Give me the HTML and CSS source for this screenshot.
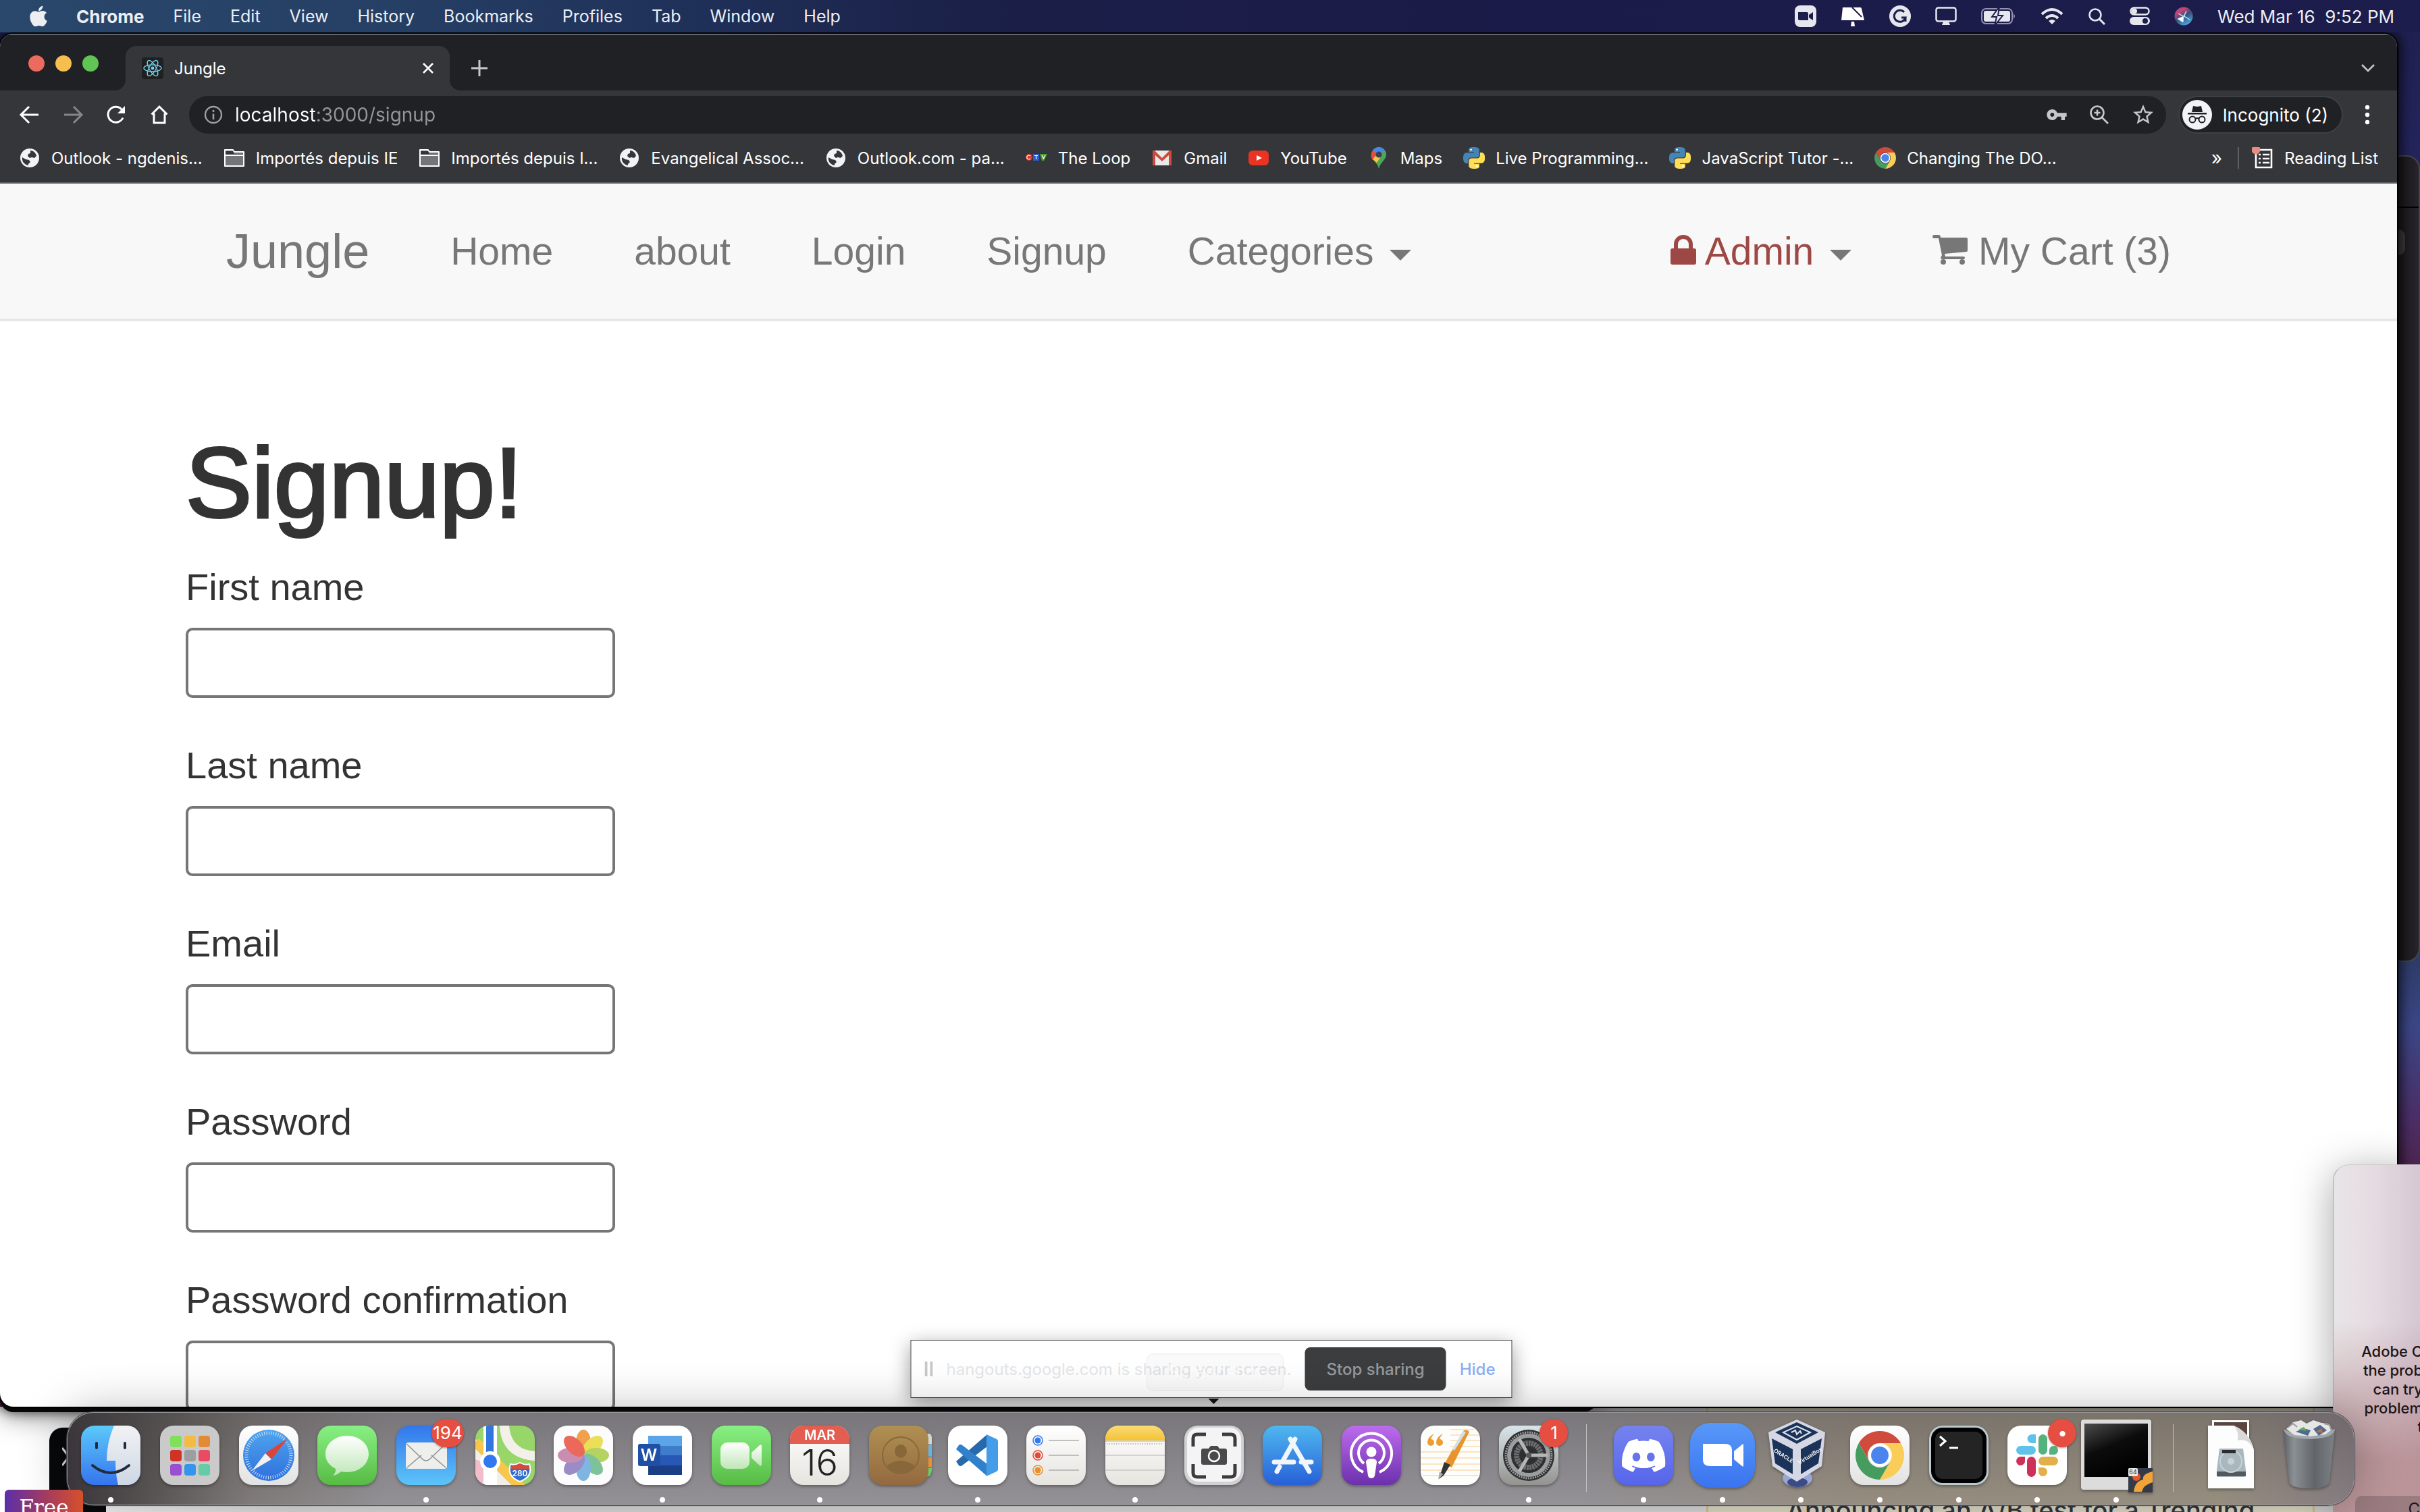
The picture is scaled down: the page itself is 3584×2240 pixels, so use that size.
FILE: index.html
```html
<!DOCTYPE html>
<html lang="en">
<head>
<meta charset="utf-8">
<title>Jungle</title>
<link rel="stylesheet" href="styles.css">
</head>
<body>
<svg class="defs" aria-hidden="true">
  <defs>
    <symbol id="globe" viewBox="0 0 32 32"><circle cx="16" cy="16" r="14" fill="#f1f3f4"/><path d="M17 5c4 0 8 3 9 8l-3 3-4-1-3 1-3-3 1-3 3-1zM5 15l5 3 5 1 2 3-3 3v2C8 26 4 21 5 15z" fill="#35363a"/></symbol>
    <symbol id="folder" viewBox="0 0 32 32"><path d="M2 4h12l2 3h14v21H2z" fill="#74757a" stroke="#fff" stroke-width="2" stroke-linejoin="round"/><path d="M3 6h11l2 4h13v2H3z" fill="#35363a"/><path d="M2 12h28" stroke="#fff" stroke-width="2"/></symbol>
    <symbol id="python" viewBox="0 0 24 24"><path fill="#4584b6" d="M14.25.18l.9.2.73.26.59.3.45.32.34.34.25.34.16.33.1.3.04.26.02.2-.01.13V8.5l-.05.63-.13.55-.21.46-.26.38-.3.31-.33.25-.35.19-.35.14-.33.1-.3.07-.26.04-.21.02H8.77l-.69.05-.59.14-.5.22-.41.27-.33.32-.27.35-.2.36-.15.37-.1.35-.07.32-.04.27-.02.21v3.06H3.17l-.21-.03-.28-.07-.32-.12-.35-.18-.36-.26-.36-.36-.35-.46-.32-.59-.28-.73-.21-.88-.14-1.05-.05-1.23.06-1.22.16-1.04.24-.87.32-.71.36-.57.4-.44.42-.33.42-.24.4-.16.36-.1.32-.05.24-.01h.16l.06.01h8.16v-.83H6.18l-.01-2.75-.02-.37.05-.34.11-.31.17-.28.25-.26.31-.23.38-.2.44-.18.51-.15.58-.12.64-.1.71-.06.77-.04.84-.02 1.27.05z"/><path fill="#ffde57" d="M21.1 6.11l.28.06.32.12.35.18.36.27.36.35.35.47.32.59.28.73.21.88.14 1.04.05 1.23-.06 1.23-.16 1.04-.24.86-.32.71-.36.57-.4.45-.42.33-.42.24-.4.16-.36.09-.32.05-.24.02-.16-.01h-8.22v.82h5.84l.01 2.76.02.36-.05.34-.11.31-.17.29-.25.25-.31.24-.38.2-.44.17-.51.15-.58.13-.64.09-.71.07-.77.04-.84.01-1.27-.04-1.07-.14-.9-.2-.73-.25-.59-.3-.45-.33-.34-.34-.25-.34-.16-.33-.1-.3-.04-.25-.02-.2.01-.13v-5.34l.05-.64.13-.54.21-.46.26-.38.3-.32.33-.24.35-.2.35-.14.33-.1.3-.06.26-.04.21-.02.13-.01h5.84l.69-.05.59-.14.5-.21.41-.28.33-.32.27-.35.2-.36.15-.36.1-.35.07-.32.04-.28.02-.21V6.07h2.09l.14.01z"/><circle cx="8.7" cy="2.9" r="1.1" fill="#fff"/><circle cx="15.3" cy="21.1" r="1.1" fill="#fff"/></symbol>
    <symbol id="chrome-logo" viewBox="-50 -50 100 100"><path d="M-43.3-25A50 50 0 0 1 43.3-25L0-25A25 25 0 0 0-21.65 12.5Z" fill="#cf4b3c"/><path d="M-43.3-25A50 50 0 0 1 43.3-25L0-25A25 25 0 0 0-21.65 12.5Z" fill="#f9cd57" transform="rotate(120)"/><path d="M-43.3-25A50 50 0 0 1 43.3-25L0-25A25 25 0 0 0-21.65 12.5Z" fill="#469c5f" transform="rotate(240)"/><circle r="23" fill="#fff"/><circle r="18" fill="#4c84ee"/></symbol>
    <linearGradient id="g-finder" x2="0" y2="1"><stop stop-color="#5cc9fa"/><stop offset="1" stop-color="#3574ee"/></linearGradient>
    <linearGradient id="g-finder2" x2="0" y2="1"><stop stop-color="#f2f2f5"/><stop offset="1" stop-color="#cdd7e4"/></linearGradient>
    <linearGradient id="g-white" x2="0" y2="1"><stop stop-color="#fff"/><stop offset="1" stop-color="#e2e2e2"/></linearGradient>
    <linearGradient id="g-cream" x2="0" y2="1"><stop stop-color="#fff"/><stop offset="1" stop-color="#e6e4df"/></linearGradient>
    <linearGradient id="g-green" x2="0" y2="1"><stop stop-color="#88f083"/><stop offset="1" stop-color="#57bb44"/></linearGradient>
    <linearGradient id="g-bubble" x2="0" y2="1"><stop stop-color="#fff"/><stop offset="1" stop-color="#bfe6b7"/></linearGradient>
    <linearGradient id="g-mail" x2="0" y2="1"><stop stop-color="#3377ec"/><stop offset="1" stop-color="#5cc5f9"/></linearGradient>
    <linearGradient id="g-blue" x2="0" y2="1"><stop stop-color="#4fa5ee"/><stop offset="1" stop-color="#2e6fdd"/></linearGradient>
    <linearGradient id="g-store" x2="0" y2="1"><stop stop-color="#4fb7ef"/><stop offset="1" stop-color="#2760d8"/></linearGradient>
    <linearGradient id="g-brown" x2="0" y2="1"><stop stop-color="#b09052"/><stop offset="1" stop-color="#93693f"/></linearGradient>
    <linearGradient id="g-purple" x2="0" y2="1"><stop stop-color="#bc6cec"/><stop offset="1" stop-color="#6c30ad"/></linearGradient>
    <linearGradient id="g-yellow" x2="0" y2="1"><stop stop-color="#fadb72"/><stop offset="1" stop-color="#f5c236"/></linearGradient>
    <linearGradient id="g-grey" x2="0" y2="1"><stop stop-color="#d9e5ea"/><stop offset="1" stop-color="#93938f"/></linearGradient>
    <linearGradient id="g-discord" x2="0" y2="1"><stop stop-color="#7583ef"/><stop offset="1" stop-color="#5765eb"/></linearGradient>
    <linearGradient id="g-zoom" x2="0" y2="1"><stop stop-color="#5898f8"/><stop offset="1" stop-color="#3a74f0"/></linearGradient>
    <linearGradient id="g-bin"><stop stop-color="#5d6368"/><stop offset=".2" stop-color="#8b9095"/><stop offset=".6" stop-color="#62666a"/><stop offset="1" stop-color="#7c8186"/></linearGradient>
    <linearGradient id="g-black" x2=".5" y2="1"><stop stop-color="#4c4c4c"/><stop offset=".5" stop-color="#0c0c0c"/><stop offset="1" stop-color="#000"/></linearGradient>
    <linearGradient id="g-siri" x2=".6" y2="1"><stop stop-color="#8a4bd0"/><stop offset=".3" stop-color="#c9436f"/><stop offset=".6" stop-color="#33507f"/><stop offset="1" stop-color="#4aa6dc"/></linearGradient>
    <clipPath id="tile"><rect width="88" height="88" rx="20"/></clipPath>
  </defs>
</svg>

<div class="desktop">
  <section class="rear terminal-window" aria-label="Terminal"><div class="terminal-tabs"></div><div class="terminal-chip"></div></section>
  <section class="rear page-window"><span class="page-tag">Free</span></section>
  <section class="rear forum-window"><p>Announcing an A/B test for a Trending</p></section>
  <section class="rear menu-window"><svg viewBox="0 0 12 32" width="12" height="32"><path d="M0 3l10 13L0 29" fill="none" stroke="#ddd" stroke-width="3"/></svg></section>
  <section class="rear black-window"></section>

  <main class="browser">
    <div class="tabstrip">
      <div class="lights"><button class="light red" aria-label="Close window"></button><button class="light amber" aria-label="Minimise"></button><button class="light green" aria-label="Zoom"></button></div>
      <div class="tab">
        <svg width="32" height="32" viewBox="0 0 32 32"><rect width="32" height="32" rx="4" fill="#202020"/><g fill="none" stroke="#6fd3f2" stroke-width="1.4"><ellipse cx="16" cy="16" rx="13" ry="5"/><ellipse cx="16" cy="16" rx="13" ry="5" transform="rotate(60 16 16)"/><ellipse cx="16" cy="16" rx="13" ry="5" transform="rotate(120 16 16)"/></g><circle cx="16" cy="16" r="2.4" fill="#6fd3f2"/></svg>
        <span>Jungle</span>
        <button class="tab-close" aria-label="Close tab"><svg width="20" height="20" viewBox="0 0 20 20"><path d="M3 3l14 14M17 3L3 17" stroke="#fff" stroke-width="2.6"/></svg></button>
      </div>
      <button class="new-tab" aria-label="New tab"><svg width="26" height="26" viewBox="0 0 26 26"><path d="M13 1v24M1 13h24" stroke="#c4c7cb" stroke-width="3"/></svg></button>
      <button class="tab-search" aria-label="Search tabs"><svg width="22" height="14" viewBox="0 0 22 14"><path d="M2 2l9 9 9-9" fill="none" stroke="#c4c7cb" stroke-width="2.6"/></svg></button>
    </div>
    <div class="toolbar">
      <button aria-label="Back"><svg width="32" height="32" viewBox="0 0 32 32"><path d="M29 16H4M15 4L3 16l12 12" fill="none" stroke="#fff" stroke-width="3"/></svg></button>
      <button aria-label="Forward"><svg width="32" height="32" viewBox="0 0 32 32"><path d="M3 16h25M17 4l12 12-12 12" fill="none" stroke="#85868a" stroke-width="3"/></svg></button>
      <button aria-label="Reload"><svg width="32" height="32" viewBox="0 0 32 32"><path d="M26 20.500A11.500 11.500 0 1 1 24 8" fill="none" stroke="#fff" stroke-width="3"/><path d="M29 3v11H18z" fill="#fff"/></svg></button>
      <button aria-label="Home"><svg width="32" height="32" viewBox="0 0 32 32"><path d="M4.500 15.500L16 4l11.500 11.500M8 14v14h16V14" fill="none" stroke="#fff" stroke-width="3"/></svg></button>
      <div class="omnibox">
        <svg width="28" height="28" viewBox="0 0 28 28"><circle cx="14" cy="14" r="12" fill="none" stroke="#9aa0a6" stroke-width="2.400"/><path d="M14 12.500V21M14 7v3" stroke="#9aa0a6" stroke-width="2.600"/></svg>
        <input class="url" type="text" aria-label="Address" value="localhost:3000/signup">
        <button aria-label="Passwords"><svg width="32" height="32" viewBox="0 0 24 24"><path fill="#c4c7cb" d="M12.650 10C11.830 7.670 9.610 6 7 6c-3.310 0-6 2.690-6 6s2.690 6 6 6c2.610 0 4.830-1.670 5.650-4H17v4h4v-4h2v-4H12.650zM7 14.200c-1.200 0-2.200-1-2.200-2.200s1-2.200 2.200-2.200 2.200 1 2.200 2.200-1 2.200-2.200 2.200z"/></svg></button>
        <button aria-label="Zoom in"><svg width="32" height="32" viewBox="0 0 32 32"><circle cx="13" cy="13" r="9.500" fill="none" stroke="#c4c7cb" stroke-width="2.600"/><path d="M20 20l9 9M13 8.500v9M8.500 13h9" stroke="#c4c7cb" stroke-width="2.600"/></svg></button>
        <button aria-label="Bookmark this page"><svg width="36" height="36" viewBox="0 0 24 24"><path fill="#c4c7cb" d="M22 9.240l-7.190-.62L12 2 9.190 8.630 2 9.240l5.460 4.730L5.820 21 12 17.270 18.180 21l-1.630-7.030L22 9.240zM12 15.400l-3.760 2.270 1-4.280-3.320-2.880 4.380-.38L12 6.100l1.710 4.040 4.380.38-3.320 2.880 1 4.280L12 15.400z"/></svg></button>
      </div>
      <button class="incognito"><svg width="44" height="44" viewBox="0 0 44 44"><circle cx="22" cy="22" r="22" fill="#f1f3f4"/><path d="M16 9l6 1 6-1 2 9H14zM8 19h28v2.500H8z" fill="#202124"/><g fill="none" stroke="#202124" stroke-width="2"><circle cx="15" cy="29" r="4.500"/><circle cx="29" cy="29" r="4.500"/><path d="M19.500 28q2.500-2 5 0"/></g></svg><span>Incognito (2)</span></button>
      <button class="kebab" aria-label="Menu"><svg width="8" height="30" viewBox="0 0 8 30"><g fill="#fff"><circle cx="4" cy="4" r="3.200"/><circle cx="4" cy="15" r="3.200"/><circle cx="4" cy="26" r="3.200"/></g></svg></button>
    </div>
    <nav class="bookmarks" aria-label="Bookmarks">
      <a href="#"><svg><use href="#globe"/></svg>Outlook - ngdenis...</a>
      <a href="#"><svg><use href="#folder"/></svg>Importés depuis IE</a>
      <a href="#"><svg><use href="#folder"/></svg>Importés depuis I...</a>
      <a href="#"><svg><use href="#globe"/></svg>Evangelical Assoc...</a>
      <a href="#"><svg><use href="#globe"/></svg>Outlook.com - pa...</a>
      <a href="#"><svg viewBox="0 0 32 32"><circle cx="5" cy="15" r="5" fill="#d93a2c"/><path d="M11 10h9v10h-9z" fill="#2a5bd0"/><path d="M21 10h11l-5 10h-3z" fill="#47a02c"/><path d="M7 13a3 3 0 1 0 0 4M13 12.500h5M15.500 12.500V18M24 12l2.500 5 2.500-5" fill="none" stroke="#fff" stroke-width="1.200"/></svg>The Loop</a>
      <a href="#"><svg viewBox="0 0 32 32"><path d="M2 5h28v22H2z" fill="#e9e9e9"/><path d="M2 27V5h3l11 11L27 5h3v22h-4V12L16 21 6 12v15z" fill="#cf4a3e"/></svg>Gmail</a>
      <a href="#"><svg viewBox="0 0 32 32"><rect x="1" y="5" width="30" height="22" rx="6" fill="#e93323"/><path d="M13 12l8 4-8 4z" fill="#fff"/></svg>YouTube</a>
      <a href="#"><svg viewBox="0 0 32 32"><path d="M5 11A11 11 0 0 1 27 11c0 8-9 11-11 21C14 22 5 19 5 11z" fill="#4ca75a"/><path d="M7 5l9 6-9 8a11 11 0 0 1 0-14z" fill="#df5040"/><path d="M7 5a11 11 0 0 1 18 0l-9 6z" fill="#4c84ee"/><path d="M7 18l6-7 6 3-6 9z" fill="#f7c544"/><circle cx="16" cy="11" r="4.500" fill="#3b4152"/></svg>Maps</a>
      <a href="#"><svg><use href="#python"/></svg>Live Programming...</a>
      <a href="#"><svg><use href="#python"/></svg>JavaScript Tutor -...</a>
      <a href="#"><svg><use href="#chrome-logo"/></svg>Changing The DO...</a>
      <button class="more" aria-label="More bookmarks">»</button>
      <span class="rule"></span>
      <button class="reading"><svg viewBox="0 0 32 32"><path d="M6 4h23v26H6z" fill="none" stroke="#fff" stroke-width="2.600"/><path d="M10 11h3M16 11h10M10 17h3M16 17h10M10 23h3M16 23h10" stroke="#fff" stroke-width="2.600"/><circle cx="6" cy="4" r="6.500" fill="#e88d83"/></svg>Reading List</button>
    </nav>

    <div class="page">
      <nav class="navbar">
        <div class="container">
          <a class="brand" href="#">Jungle</a>
          <a class="link" href="#">Home</a>
          <a class="link" href="#">about</a>
          <a class="link" href="#">Login</a>
          <a class="link" href="#">Signup</a>
          <a class="link" href="#">Categories <span class="caret"></span></a>
          <a class="link admin" href="#"><svg width="38" height="44" viewBox="0 0 38 44"><path d="M3 20h32a3 3 0 0 1 3 3v18a3 3 0 0 1-3 3H3a3 3 0 0 1-3-3V23a3 3 0 0 1 3-3z" fill="#9d4845"/><path d="M8 22v-8a11 11 0 0 1 22 0v8" fill="none" stroke="#9d4845" stroke-width="6"/></svg> Admin <span class="caret"></span></a>
          <a class="link cart" href="#"><svg width="52" height="44" viewBox="0 0 52 44"><path d="M2 0h7q3 0 3 4h38q2 0 2 2v17q0 2-2 2L18 28l1 4h27q2 0 2 2t-2 2H14q-2 0-2-2l2-4L9 5H2Q0 5 0 2.500T2 0z" fill="#777"/><circle cx="16" cy="40" r="4" fill="#777"/><circle cx="44" cy="40" r="4" fill="#777"/></svg> My Cart (3)</a>
        </div>
      </nav>
      <form class="container signup">
        <h1>Signup!</h1>
        <div class="field"><label for="first">First name</label><input id="first" type="text"></div>
        <div class="field"><label for="last">Last name</label><input id="last" type="text"></div>
        <div class="field"><label for="email">Email</label><input id="email" type="email"></div>
        <div class="field"><label for="pass">Password</label><input id="pass" type="password"></div>
        <div class="field"><label for="confirm">Password confirmation</label><input id="confirm" type="password"></div>
      </form>
    </div>
  </main>

  <aside class="dialog"><p>Adobe C<br>the prob<br>can try<br>problem<br>t</p><button>C</button></aside>

  <aside class="share">
    <svg width="12" height="22" viewBox="0 0 12 22"><path d="M2 0v22M10 0v22" stroke="#c6c8ca" stroke-width="4"/></svg>
    <span class="share-text">hangouts.google.com is sharing your screen.</span>
    <button>Stop sharing</button>
    <a href="#">Hide</a>
    <span class="tooltip">Screenshot</span>
  </aside>

  <nav class="dock" aria-label="Dock">
    <button class="app on" aria-label="Finder"><svg viewBox="0 0 88 88"><g clip-path="url(#tile)"><rect width="88" height="88" fill="url(#g-finder)"/><path d="M49 0Q38 24 38 52h13q0 20 4 36h33V0z" fill="url(#g-finder2)"/></g><path d="M23 26v7M65 26v7M17 59q27 22 54 0" fill="none" stroke="#222c3c" stroke-width="4" stroke-linecap="round"/></svg></button>
    <button class="app" aria-label="Launchpad"><svg viewBox="0 0 88 88"><rect width="88" height="88" rx="20" fill="#cacaca"/><g><rect x="15" y="15" width="17" height="17" rx="4" fill="#7fe05a"/><rect x="36" y="15" width="17" height="17" rx="4" fill="#f4bb42"/><rect x="57" y="15" width="17" height="17" rx="4" fill="#e38a36"/><rect x="15" y="36" width="17" height="17" rx="4" fill="#cf3326"/><rect x="36" y="36" width="17" height="17" rx="4" fill="#9b9fa2"/><rect x="57" y="36" width="17" height="17" rx="4" fill="#ea4b62"/><rect x="15" y="57" width="17" height="17" rx="4" fill="#9a4fd2"/><rect x="36" y="57" width="17" height="17" rx="4" fill="#3595ee"/><rect x="57" y="57" width="17" height="17" rx="4" fill="#65cba6"/></g></svg></button>
    <button class="app" aria-label="Safari"><svg viewBox="0 0 88 88"><rect width="88" height="88" rx="20" fill="url(#g-white)"/><circle cx="44" cy="44" r="38" fill="url(#g-blue)"/><circle cx="44" cy="44" r="33" fill="none" stroke="#d4e6fa" stroke-width="5" stroke-dasharray="1 2.450"/><path d="M72 19L48 50l-9-9z" fill="#dd4438"/><path d="M19 67l20-26 9 9z" fill="#f1f1f1"/></svg></button>
    <button class="app" aria-label="Messages"><svg viewBox="0 0 88 88"><rect width="88" height="88" rx="20" fill="url(#g-green)"/><path d="M44 15c18 0 32 12 32 27S62 69 44 69q-5 0-9-1-5 5-12 6 5-5 4-10-15-8-15-22c0-15 14-27 32-27z" fill="url(#g-bubble)"/></svg></button>
    <button class="app on" aria-label="Mail"><svg viewBox="0 0 88 88"><rect width="88" height="88" rx="20" fill="url(#g-mail)"/><rect x="14" y="25" width="61" height="39" rx="4" fill="#eeeeec"/><path d="M16 62l21-18M73 62L52 44M15 27l24 23q5 4 10 0l24-23" fill="none" stroke="#8e8f90" stroke-width="1.500"/></svg><span class="badge wide">194</span></button>
    <button class="app" aria-label="Maps"><svg viewBox="0 0 88 88"><g clip-path="url(#tile)"><rect width="88" height="88" fill="#98d66a"/><path d="M0 20l70 68H0z" fill="#f2eee8"/><path d="M0 50l28 10v28H0z" fill="#f2bcca"/><path d="M0 24l74 74" stroke="#f7c64b" stroke-width="15"/><path d="M36 0h14q3 36 38 38v14Q38 48 36 0z" fill="#f3f0ea"/><path d="M12 0h20v88H12z" fill="#fff"/><path d="M16 0h11v50H16z" fill="#3277de"/></g><circle cx="22" cy="53" r="15" fill="#fff"/><circle cx="22" cy="53" r="10" fill="#3277ee"/><path d="M52 57q7 2 14-2 7 4 14 2 6 18-14 26-20-8-14-26z" fill="#2f6fce" stroke="#fff" stroke-width="2"/><path d="M53 59q7 1 13-3 7 4 13 3l1 5H52z" fill="#d84a3c"/><text x="66" y="75" class="t10">280</text></svg></button>
    <button class="app" aria-label="Photos"><svg viewBox="0 0 88 88"><rect width="88" height="88" rx="20" fill="#fcfcfc"/><g opacity=".85"><ellipse cx="44" cy="25" rx="11" ry="19" fill="#f0922e"/><ellipse cx="44" cy="25" rx="11" ry="19" fill="#e9d93c" transform="rotate(45 44 44)"/><ellipse cx="44" cy="25" rx="11" ry="19" fill="#a9cd45" transform="rotate(90 44 44)"/><ellipse cx="44" cy="25" rx="11" ry="19" fill="#68b987" transform="rotate(135 44 44)"/><ellipse cx="44" cy="25" rx="11" ry="19" fill="#69a9dd" transform="rotate(180 44 44)"/><ellipse cx="44" cy="25" rx="11" ry="19" fill="#8a79bd" transform="rotate(225 44 44)"/><ellipse cx="44" cy="25" rx="11" ry="19" fill="#c27aa6" transform="rotate(270 44 44)"/><ellipse cx="44" cy="25" rx="11" ry="19" fill="#e8503f" transform="rotate(315 44 44)"/></g></svg></button>
    <button class="app on" aria-label="Word"><svg viewBox="0 0 88 88"><rect width="88" height="88" rx="20" fill="#fff"/><path d="M23 15h50v15H23z" fill="#5ba4e8"/><path d="M23 30h50v14H23z" fill="#3f7ccc"/><path d="M23 44h50v15H23z" fill="#2858b5"/><path d="M23 59h50v14H23z" fill="#1b3f86"/><rect x="8" y="27" width="33" height="33" rx="3" fill="#204fa6"/><text x="24" y="52" class="t24">W</text></svg></button>
    <button class="app" aria-label="FaceTime"><svg viewBox="0 0 88 88"><rect width="88" height="88" rx="20" fill="url(#g-green)"/><rect x="13" y="25" width="43" height="39" rx="10" fill="url(#g-bubble)"/><path d="M59 40l12-11q3-2 3 2v26q0 4-3 2L59 48z" fill="url(#g-bubble)"/></svg></button>
    <button class="app on" aria-label="Calendar"><svg viewBox="0 0 88 88"><g clip-path="url(#tile)"><rect width="88" height="88" fill="url(#g-cream)"/><rect width="88" height="27" fill="#e35d50"/></g><text x="44" y="21" class="t16">MAR</text><text x="44" y="74" class="t52">16</text></svg></button>
    <button class="app" aria-label="Contacts"><svg viewBox="0 0 88 88"><path d="M84 12h6q3 2 3 6v10h-9z" fill="#d5d5cf"/><path d="M84 29h9v17h-9z" fill="#64b4e4"/><path d="M84 47h9v15h-9z" fill="#ea8f35"/><path d="M84 63h9q0 13-9 13z" fill="#67cf68"/><rect width="88" height="88" rx="20" fill="url(#g-brown)"/><g fill="#88683b"><circle cx="47" cy="44" r="27" fill="none" stroke="#88683b" stroke-width="2"/><ellipse cx="47" cy="38" rx="9" ry="10"/><path d="M26 60q21-16 42 0-9 11-21 11T26 60z"/></g></svg></button>
    <button class="app on" aria-label="Visual Studio Code"><svg viewBox="0 0 88 88"><rect width="88" height="88" rx="20" fill="#fff"/><path d="M12 53l4 6q2 2 5 0l37-28V13z" fill="#2769ab"/><path d="M12 35l4-6q2-2 5 0l37 28v18z" fill="#3180cb"/><path d="M57 13l15 7q2 1 2 3v42q0 2-2 3l-15 7z" fill="#459dea"/></svg></button>
    <button class="app" aria-label="Reminders"><svg viewBox="0 0 88 88"><rect width="88" height="88" rx="20" fill="url(#g-cream)"/><g fill="none" stroke-width="1.500"><circle cx="17" cy="22" r="7" stroke="#3478f0"/><circle cx="17" cy="44" r="7" stroke="#e5463a"/><circle cx="17" cy="66" r="7" stroke="#ea8f2c"/></g><circle cx="17" cy="22" r="4.500" fill="#3478f0"/><circle cx="17" cy="44" r="4.500" fill="#e5463a"/><circle cx="17" cy="66" r="4.500" fill="#ea8f2c"/><path d="M33 22h45M33 44h45M33 66h45" stroke="#adadad" stroke-width="1.500"/></svg></button>
    <button class="app on" aria-label="Notes"><svg viewBox="0 0 88 88"><g clip-path="url(#tile)"><rect width="88" height="88" fill="url(#g-cream)"/><rect width="88" height="22" fill="url(#g-yellow)"/><path d="M0 23h88M0 44h88M0 66h88" stroke="#c9c7c2" stroke-width="1.500"/><path d="M2 27h84" stroke="#aaa" stroke-width="1.500" stroke-dasharray="1.500 2"/></g></svg></button>
    <button class="app" aria-label="Screenshot"><svg viewBox="0 0 88 88"><rect width="88" height="88" rx="20" fill="#d2d2d4"/><rect x="4" y="3" width="80" height="80" rx="17" fill="#f4f4f5"/><path d="M13 31V19q0-6 6-6h13M56 13h13q6 0 6 6v12M75 57v13q0 6-6 6H56M32 76H19q-6 0-6-6V57" fill="none" stroke="#3c3c3e" stroke-width="5"/><path d="M28 34h8l3-4h10l3 4h8q3 0 3 3v18q0 3-3 3H28q-3 0-3-3V37q0-3 3-3z" fill="#4a4a4c"/><circle cx="44" cy="45" r="8" fill="#4a4a4c" stroke="#fff" stroke-width="2.500"/></svg></button>
    <button class="app" aria-label="App Store"><svg viewBox="0 0 88 88"><rect width="88" height="88" rx="20" fill="url(#g-store)"/><path d="M48 20L29 54M41 20l28 48M17 54h29M57 54h15M25 61l-4 7" stroke="#f1f6fc" stroke-width="7" stroke-linecap="round"/></svg></button>
    <button class="app" aria-label="Podcasts"><svg viewBox="0 0 88 88"><rect width="88" height="88" rx="20" fill="url(#g-purple)"/><g fill="none" stroke="#fff" stroke-width="4"><path d="M32 69a30 30 0 1 1 24 0"/><path d="M33 56a19 19 0 1 1 22 0"/></g><circle cx="44" cy="39" r="7.500" fill="#fff"/><path d="M36 54q0-5 8-5t8 5l-3 20q-1 4-5 4t-5-4z" fill="#fff"/></svg></button>
    <button class="app" aria-label="Pages"><svg viewBox="0 0 88 88"><rect width="88" height="88" rx="20" fill="#fdfdfb"/><path d="M44 6h36M44 14h42M44 22h44M44 31h44M0 39h88M0 48h88M0 57h88M0 66h88M3 74h82" stroke="#fbdcae" stroke-width="1.500"/><path d="M20 12q-10 5-10 13a5 5 0 1 0 5-5q1-4 5-8zM33 12q-10 5-10 13a5 5 0 1 0 5-5q1-4 5-8z" fill="#ee9c2d"/><path d="M63 8q5-3 9 1L46 62l-11-5z" fill="#e8932b"/><path d="M63 8l4 2-17 27-3-2z" fill="#cfe0ee"/><path d="M35 54l9 4-10 16-7 5z" fill="#333"/><path d="M28 68l5 4-7 8z" fill="#aaa"/></svg></button>
    <button class="app on" aria-label="System Preferences"><svg viewBox="0 0 88 88"><rect width="88" height="88" rx="20" fill="url(#g-grey)"/><circle cx="44" cy="44" r="38" fill="#2e2f30"/><circle cx="44" cy="44" r="34" fill="none" stroke="#9b9d9e" stroke-width="3" stroke-dasharray="2 1.500"/><circle cx="44" cy="44" r="29" fill="none" stroke="#9b9d9e" stroke-width="6"/><circle cx="44" cy="44" r="18" fill="none" stroke="#6c6e70" stroke-width="8" stroke-dasharray="3 1"/><path d="M44 44h28M44 44L30 20M44 44L30 68" stroke="#b4b6b7" stroke-width="5"/><circle cx="44" cy="44" r="4" fill="#55585a"/></svg><span class="badge">1</span></button>
    <span class="divider"></span>
    <button class="app on" aria-label="Discord"><svg viewBox="0 0 88 88"><rect width="88" height="88" rx="20" fill="url(#g-discord)"/><g transform="translate(12 12) scale(2.680)"><path fill="#fff" d="M20.317 4.370a19.791 19.791 0 00-4.885-1.515.074.074 0 00-.079.037c-.211.375-.445.865-.608 1.250-1.845-.276-3.680-.276-5.487 0-.164-.393-.406-.874-.618-1.250a.077.077 0 00-.079-.037 19.736 19.736 0 00-4.885 1.515.070.070 0 00-.032.028C.533 9.046-.319 13.580.099 18.058a.082.082 0 00.031.056c2.053 1.508 4.041 2.423 5.993 3.029a.078.078 0 00.084-.028c.462-.630.873-1.295 1.226-1.994a.076.076 0 00-.042-.106c-.653-.248-1.274-.550-1.872-.892a.077.077 0 01-.008-.128c.126-.094.252-.192.372-.291a.074.074 0 01.078-.011c3.928 1.793 8.180 1.793 12.061 0a.074.074 0 01.079.010c.120.099.246.198.373.292a.077.077 0 01-.007.128 12.299 12.299 0 01-1.873.891.077.077 0 00-.041.107c.360.698.772 1.363 1.225 1.993a.076.076 0 00.084.029c1.961-.607 3.950-1.522 6.002-3.029a.077.077 0 00.031-.055c.500-5.177-.838-9.674-3.549-13.660a.061.061 0 00-.031-.029zM8.020 15.331c-1.183 0-2.157-1.086-2.157-2.419 0-1.333.956-2.419 2.157-2.419 1.211 0 2.176 1.095 2.157 2.419 0 1.333-.956 2.419-2.157 2.419zm7.975 0c-1.183 0-2.157-1.086-2.157-2.419 0-1.333.955-2.419 2.157-2.419 1.211 0 2.176 1.095 2.157 2.419 0 1.333-.946 2.419-2.157 2.419z"/></g></svg></button>
    <button class="app on" aria-label="Zoom"><svg viewBox="0 0 88 88"><rect x="-4" y="-4" width="96" height="96" rx="30" fill="url(#g-zoom)"/><path d="M15 27h32q11 0 11 9v24H26q-11 0-11-9z" fill="#fff"/><path d="M61 38l12-10q2-2 2 1v30q0 3-2 1L61 50z" fill="#fff"/></svg></button>
    <button class="app on" aria-label="VirtualBox"><svg viewBox="0 0 88 88"><ellipse cx="39" cy="78" rx="22" ry="13" fill="#97a8d6"/><ellipse cx="39" cy="84" rx="15" ry="7" fill="#3b4b86"/><path d="M38-9L80 10 75 60 38 83 2 60-4 10z" fill="#d5d8e4"/><path d="M38-5L70 10 38 27 6 10z" fill="#1b3358"/><path d="M38 1l20 9-20 11-20-11z" fill="none" stroke="#dfe3ee" stroke-width="2"/><path d="M30 10l6-3 2 6 5-5 2 4" fill="none" stroke="#dfe3ee" stroke-width="2"/><path d="M1 19l31 16v37L6 56z" fill="#1b3358"/><path d="M75 19L44 35v37l26-16z" fill="#1b3358"/><text class="t8" transform="translate(17 47) rotate(32)">ORACLE</text><text class="t8" transform="translate(59 47) rotate(-32)">VirtualBox</text></svg></button>
    <button class="app on" aria-label="Chrome"><svg viewBox="0 0 88 88"><rect width="88" height="88" rx="20" fill="url(#g-white)"/><use href="#chrome-logo" x="8" y="8" width="72" height="72"/></svg></button>
    <button class="app on" aria-label="Terminal"><svg viewBox="0 0 88 88"><rect width="88" height="88" rx="20" fill="#b9c9d0"/><rect x="3" y="3" width="82" height="82" rx="17" fill="#000"/><rect x="9" y="9" width="70" height="70" rx="10" fill="#242424"/><path d="M16 16l8 7-8 7M30 33h13" fill="none" stroke="#fff" stroke-width="3"/></svg></button>
    <button class="app on" aria-label="Slack"><svg viewBox="0 0 88 88"><rect width="88" height="88" rx="20" fill="#fff"/><g fill="#60c2eb"><path d="M42 13v13h-6a6.500 6.500 0 0 1 0-13z"/><rect x="13" y="30" width="29" height="13" rx="6.500"/></g><g fill="#55b27d"><rect x="46" y="13" width="13" height="30" rx="6.500"/><path d="M62 43V36a6.500 6.500 0 1 1 6.500 7z"/></g><g fill="#e2b048"><rect x="46" y="46" width="29" height="13" rx="6.500"/><path d="M46 62h6.500a6.500 6.500 0 1 1-6.500 7z"/></g><g fill="#ce3158"><rect x="29" y="46" width="13" height="30" rx="6.500"/><path d="M26 46v6a6.500 6.500 0 1 1-7-6z"/></g></svg><span class="badge">•</span></button>
    <button class="app on" aria-label="Minimised window"><svg viewBox="0 0 88 88"><rect x="-8" y="-9" width="104" height="104" rx="4" fill="#dcdcdc"/><rect x="-3" y="-3" width="94" height="79" fill="url(#g-black)"/><rect x="62" y="63" width="36" height="36" fill="#343b47"/><path d="M98 68q-16 4-14 12-12 2-14 18h12q2-10 16-14z" fill="#f0a338"/><circle cx="74" cy="76" r="6" fill="#e2592a"/><rect x="62" y="63" width="14" height="12" rx="2" fill="#e8e8e8"/><text x="69" y="72" class="t9">64</text></svg></button>
    <span class="divider"></span>
    <button class="app" aria-label="Documents"><svg viewBox="0 0 88 88"><path d="M16-8h55v40H16z" fill="#fff"/><path d="M19-5h49v34H19z" fill="#5b463f"/><path d="M10 0h38q24 10 30 36v57H10z" fill="#fdfdfd"/><path d="M48 0q8 8 6 22 16-4 24 14Q72 10 48 0z" fill="#d9d9d9"/><path d="M27 34h35l4 32v8q0 2-2 2H25q-2 0-2-2v-8z" fill="#a9b8bf"/><path d="M23 68h43v7H23z" fill="#55595b"/><circle cx="44" cy="53" r="16" fill="none" stroke="#c7d2d6" stroke-width="2"/><circle cx="44" cy="53" r="5" fill="#c7d2d6"/><path d="M31 36h20v5H31z" fill="#2a2c2d"/></svg></button>
    <button class="app" aria-label="Trash"><svg viewBox="0 0 88 88"><path d="M6 5l76 0-8 78q-2 10-30 10t-30-10z" fill="url(#g-bin)"/><path d="M6 5q38 22 76 0-2 8-10 11-28 8-56 0Q8 13 6 5z" fill="#a1a6aa"/><path d="M10 5l10-10 12-3 8 5 10-5 12 4 10 1 6 9-10 7-22 3-24-2z" fill="#e6e6e4"/><path d="M24 9l12-5 10 3-4 8zM50 5l10-6 10 8-12 8z" fill="#50698f"/><path d="M28 6l8-4 4 6z" fill="#5eb04f"/><path d="M54 9l8-5 2 7z" fill="#c66d3a"/><path d="M12 3l8-6 6 5M66-3l8 2 3 9" fill="none" stroke="#96989b" stroke-width="2"/></svg></button>
  </nav>
</div>

<header class="menubar">
  <nav class="menus">
    <button aria-label="Apple"><svg width="26" height="32" viewBox="0 24 384 464"><path fill="#eceef2" d="M318.700 268.700c-.2-36.700 16.400-64.400 50-84.800-18.800-26.900-47.200-41.700-84.700-44.600-35.500-2.800-74.300 20.700-88.500 20.700-15 0-49.400-19.700-76.400-19.700C63.300 141.200 4 184.800 4 273.500q0 39.300 14.400 81.200c12.800 36.700 59 126.700 107.200 125.200 25.200-.6 43-17.900 75.800-17.900 31.800 0 48.300 17.900 76.400 17.900 48.600-.7 90.400-82.500 102.600-119.300-65.200-30.700-61.700-90-61.700-91.900zm-56.600-164.200c27.300-32.400 24.800-61.900 24-72.500-24.100 1.400-52 16.400-67.900 34.900-17.500 19.800-27.800 44.300-25.600 71.900 26.100 2 49.900-11.400 69.500-34.300z"/></svg></button>
    <button class="strong">Chrome</button><button>File</button><button>Edit</button><button>View</button><button>History</button><button>Bookmarks</button><button>Profiles</button><button>Tab</button><button>Window</button><button>Help</button>
  </nav>
  <div class="status">
    <svg width="32" height="32" viewBox="0 0 32 32"><rect width="32" height="32" rx="8" fill="#e6e7ee"/><path d="M5 10h13q2 0 2 2v10H7q-2 0-2-2zM21 14l6-4v12l-6-4z" fill="#1c1d4b"/></svg>
    <svg width="36" height="32" viewBox="0 0 36 32"><path d="M3 3h26q2 0 2 2l4 17H1z" fill="#fff"/><path d="M16 24h4l1 7h-6z" fill="#fff"/><path d="M17 3l14 14" stroke="#1c1d4b" stroke-width="2"/></svg>
    <svg width="32" height="32" viewBox="0 0 32 32"><circle cx="16" cy="16" r="16" fill="#e6e7ee"/><path d="M22 10a8.500 8.500 0 1 0 2 8h-6M24 18v6" fill="none" stroke="#1c1d4b" stroke-width="3"/></svg>
    <svg width="32" height="28" viewBox="0 0 32 28"><rect x="1.500" y="1.500" width="29" height="20" rx="3" fill="none" stroke="#e6e7ee" stroke-width="2.500"/><path d="M12 22h8l2 5H10z" fill="#e6e7ee"/></svg>
    <svg width="52" height="26" viewBox="0 0 52 26"><rect x="1" y="2" width="45" height="22" rx="6" fill="none" stroke="#9293b0" stroke-width="2"/><rect x="4" y="5" width="39" height="16" rx="3" fill="#e6e7ee"/><path d="M48 9q4 4 0 8z" fill="#9293b0"/><path d="M27-1L16 14h7l-3 13 12-15h-7z" fill="#e6e7ee" stroke="#1c1d4b" stroke-width="2"/></svg>
    <svg width="34" height="26" viewBox="0 0 34 26"><path d="M2 10q15-14 30 0M8 16q9-8 18 0" fill="none" stroke="#e6e7ee" stroke-width="4"/><path d="M12 20q5-4 10 0l-5 5z" fill="#e6e7ee"/></svg>
    <svg width="26" height="26" viewBox="0 0 26 26"><circle cx="11" cy="11" r="8.500" fill="none" stroke="#e6e7ee" stroke-width="2.600"/><path d="M17 17l8 8" stroke="#e6e7ee" stroke-width="3"/></svg>
    <svg width="30" height="28" viewBox="0 0 30 28"><rect x="1.500" y="1.500" width="27" height="10" rx="5" fill="none" stroke="#e6e7ee" stroke-width="2.500"/><circle cx="7" cy="6.500" r="4" fill="#e6e7ee"/><rect y="15" width="30" height="12" rx="6" fill="#e6e7ee"/><circle cx="23" cy="21" r="4" fill="#1c1d4b"/></svg>
    <svg width="28" height="28" viewBox="0 0 28 28"><circle cx="14" cy="14" r="13.500" fill="url(#g-siri)"/><path d="M5 18l9-4 9 5-8-5 3-8-4 8-8-4 8 5-1 8z" fill="#fff" stroke="#bfe6f5" stroke-width="1"/></svg>
    <time>Wed Mar 16&nbsp; 9:52 PM</time>
  </div>
</header>
</body>
</html>
```
FILE: styles.css
```css
* { box-sizing: border-box; }
html, body { height: 100%; }
body {
  margin: 0;
  overflow: hidden;
  font-family: Inter, "Liberation Sans", sans-serif;
  font-size: 24px;
  background: #1b1b48;
}
button { border: 0; padding: 0; background: none; font: inherit; color: inherit; }
a { color: inherit; text-decoration: none; }
svg { display: block; flex: none; }
.defs { position: absolute; width: 0; height: 0; }

/* menu bar */
.menubar {
  position: absolute;
  inset: 0 0 auto;
  height: 48px;
  padding: 0 38px 0 44px;
  display: flex;
  justify-content: space-between;
  align-items: center;
  font-size: 25px;
  color: #eceef2;
  background: linear-gradient(90deg, #29486b 0, #263f65 16%, #1f3058 29%, #1b2048 40%, #1b1b48 60%, #1d1d4d 100%);
}
.menus { display: flex; align-items: center; gap: 43px; }
.menus .strong { font-size: 26px; font-weight: 700; }
.status { display: flex; align-items: center; gap: 36px; font-size: 26px; }

/* desktop */
.desktop {
  position: absolute;
  inset: 0;
  overflow: hidden;
  background: linear-gradient(180deg, #1f1f50 0, #23245a 10%, #2c3a66 63%, #3b4685 68%, #4b2e66 74%, #54264f 78%);
}
.rear { position: absolute; }
.terminal-window {
  top: 230px;
  right: 0;
  bottom: 815px;
  width: 400px;
  border: 2px solid #45454c;
  border-radius: 20px;
  background: linear-gradient(90deg, #161616 91%, #27242a);
}
.terminal-tabs { height: 76px; border-bottom: 2px solid #000; }
.terminal-chip { width: 376px; height: 38px; margin-top: 32px; border-radius: 10px; background: #3b3b3d; }
.page-window {
  left: 0;
  bottom: 0;
  width: 100%;
  height: 156px;
  background: linear-gradient(90deg, #fff 0, #fff 2%, #e0e0e0 12%, #dcdcdc);
}
.page-tag {
  position: absolute;
  left: 7px;
  bottom: 0;
  width: 116px;
  height: 33px;
  padding-top: 8px;
  overflow: hidden;
  z-index: 1;
  border-radius: 6px 6px 0 0;
  background: linear-gradient(90deg, #5b2fa8, #a63c5c 55%, #d6502b);
  color: #fff;
  font: 31px/36px "DejaVu Serif", serif;
  text-align: center;
}
.forum-window {
  left: 2527px;
  right: 156px;
  bottom: 0;
  height: 156px;
  padding: 128px 0 0 116px;
  border: solid #d8c791;
  border-width: 0 3px;
  background: #e3dfca;
}
.forum-window p { margin: 0; font: 500 38px/50px Inter, sans-serif; color: #33363c; white-space: nowrap; }
.menu-window { left: 123px; bottom: 0; width: 34px; height: 125px; background: #08090b; }
.menu-window::before {
  content: "";
  position: absolute;
  right: 34px;
  top: 0;
  width: 50px;
  height: 92px;
  border-radius: 20px 0 0;
  background: #08090b;
}
.menu-window svg { position: absolute; left: -31px; top: 27px; }
.black-window {
  left: 0;
  bottom: 148px;
  width: 66%;
  height: 200px;
  border-radius: 20px;
  background: #0b0c0d;
  box-shadow: 0 4px 40px rgba(0, 0, 0, .5);
}

/* browser */
.browser {
  position: absolute;
  inset: 50px 34px 156px 0;
  display: flex;
  flex-direction: column;
  overflow: hidden;
  border-radius: 20px;
  background: #fff;
  box-shadow: 0 0 0 2px #000, 0 0 16px 8px rgba(0, 0, 0, .6);
}
.tabstrip {
  flex: none;
  height: 84px;
  padding: 16px 32px 0 42px;
  display: flex;
  align-items: center;
  border-top: 2px solid #65666a;
  background: #202124;
}
.lights { display: flex; gap: 16px; padding-bottom: 14px; }
.light { width: 24px; height: 24px; border-radius: 50%; }
.red { background: #ec6a5e; }
.amber { background: #f4bf50; }
.green { background: #61c554; }
.tab {
  position: relative;
  align-self: stretch;
  width: 480px;
  margin-left: 40px;
  padding: 0 22px 0 24px;
  display: flex;
  align-items: center;
  gap: 16px;
  border-radius: 16px 16px 0 0;
  background: #35363a;
  color: #fff;
}
.tab::before, .tab::after {
  content: "";
  position: absolute;
  bottom: 0;
  width: 16px;
  height: 16px;
}
.tab::before { right: 100%; background: radial-gradient(circle at 0 0, transparent 16px, #35363a 16px); }
.tab::after { left: 100%; background: radial-gradient(circle at 100% 0, transparent 16px, #35363a 16px); }
.tab-close { margin-left: auto; }
.new-tab { margin-left: 31px; }
.tab-search { margin-left: auto; }
.toolbar {
  flex: none;
  height: 72px;
  padding: 0 40px 0 28px;
  display: flex;
  align-items: center;
  gap: 32px;
  background: #35363a;
}
.omnibox {
  flex: 1;
  height: 56px;
  margin-left: -4px;
  padding: 0 16px 0 22px;
  display: flex;
  align-items: center;
  gap: 18px;
  border-radius: 28px;
  background: #202124;
}
.omnibox button { margin-left: 13px; }
.url {
  flex: 1;
  height: 40px;
  padding: 0;
  border: 0;
  outline: 0;
  font: 28px Inter, sans-serif;
  color: #fff;
  background: linear-gradient(90deg, #fff 120px, #93979c 120px);
  -webkit-background-clip: text;
  background-clip: text;
  -webkit-text-fill-color: transparent;
}
.incognito {
  height: 56px;
  margin-left: -14px;
  padding: 0 20px 0 4px;
  display: flex;
  align-items: center;
  gap: 16px;
  border: 2px solid #3f4044;
  border-radius: 28px;
  background: #202124;
  color: #fff;
  font-size: 26px;
}
.bookmarks {
  flex: none;
  height: 66px;
  padding: 0 28px 8px;
  display: flex;
  align-items: center;
  gap: 31px;
  border-bottom: 2px solid #606166;
  background: #35363a;
  color: #fff;
  font-size: 24px;
  white-space: nowrap;
}
.bookmarks a, .reading { display: flex; align-items: center; gap: 16px; }
.bookmarks svg { width: 32px; height: 32px; }
.more { margin-left: auto; font-size: 28px; }
.rule { width: 2px; height: 32px; margin: 0 -12px 0 -8px; background: #5f6064; }

/* page */
.page { flex: 1; min-height: 0; font-family: "Liberation Sans", sans-serif; color: #333; }
.container { max-width: 3000px; margin: 0 auto; }
.navbar { background: #f8f8f8; border-bottom: 4px solid #e7e7e7; color: #777; }
.navbar .container { display: flex; font-size: 57px; line-height: 80px; white-space: pre; }
.brand { padding: 60px; font-size: 72px; }
.link { padding: 60px; display: flex; align-items: baseline; }
.cart svg { margin-bottom: -4px; }
.caret { align-self: center; margin: 12px 0 0 8px; border: 16px solid transparent; border-top-color: #777; border-bottom: 0; }
.admin { margin-left: auto; color: #9d4845; }
.signup { padding-top: 160px; }
h1 {
  margin: 0 0 36px;
  font-size: 147px;
  line-height: 158px;
  font-weight: 400;
  -webkit-text-stroke: 4px #333;
}
.field { margin-bottom: 60px; }
.field label { display: block; font-size: 56px; line-height: 80px; margin-bottom: 20px; }
.field input {
  display: block;
  width: 636px;
  height: 104px;
  padding: 4px 8px;
  border: 4px solid #767676;
  border-radius: 10px;
  font: inherit;
  background: #fff;
}

/* crash dialog */
.dialog {
  position: absolute;
  top: 1725px;
  right: 0;
  bottom: 0;
  width: 129px;
  padding-top: 262px;
  overflow: hidden;
  border-top: 1px solid #cfc8cc;
  border-left: 1px solid #aaa5a8;
  border-radius: 24px 0 0;
  background: linear-gradient(180deg, transparent 45%, rgba(180, 138, 142, .85) 85%), linear-gradient(90deg, #e8e5e7, #e6dde2 40%, #d5c7d4);
  box-shadow: 0 10px 60px rgba(0, 0, 0, .35);
  color: #1c1418;
}
.dialog p { margin: 0 -4px 0 0; font-size: 22px; line-height: 28px; font-weight: 500; text-align: right; }
.dialog button {
  position: absolute;
  left: 32px;
  right: 0;
  bottom: 0;
  height: 24px;
  overflow: hidden;
  border-radius: 10px 0 0;
  background: #9b7c80;
  font-size: 24px;
  line-height: 40px;
  text-align: right;
}

/* screen sharing bar */
.share {
  position: absolute;
  left: 50%;
  bottom: 169px;
  margin-left: 2px;
  transform: translateX(-50%);
  height: 86px;
  padding: 0 24px 0 20px;
  display: flex;
  align-items: center;
  gap: 20px;
  border: 1px solid #444;
  background: #fff;
  box-shadow: 0 8px 30px rgba(0, 0, 0, .4);
  white-space: nowrap;
}
.share-text { color: #e4e6e9; }
.share button {
  height: 64px;
  padding: 0 32px;
  border-radius: 8px;
  background: #3c3d3f;
  color: #97999c;
  font-weight: 500;
}
.share a { color: #8ab0f5; font-weight: 500; }
.tooltip {
  position: absolute;
  left: 348px;
  top: 19px;
  width: 204px;
  height: 56px;
  border: 2px solid rgba(0, 0, 0, .03);
  border-radius: 10px;
  background: rgba(0, 0, 0, .02);
  color: rgba(255, 255, 255, .7);
  font-size: 26px;
  line-height: 52px;
  text-align: center;
}
.tooltip::after {
  content: "";
  position: absolute;
  left: 90px;
  top: 65px;
  border: 8px solid transparent;
  border-top-color: #111;
}

/* dock */
.dock {
  position: absolute;
  left: 99px;
  right: 97px;
  bottom: 10px;
  height: 138px;
  padding: 0 7px 0 6px;
  display: flex;
  border-radius: 40px;
  border: 1px solid #97949a;
  background:
    linear-gradient(180deg, rgba(60, 56, 60, .3), transparent),
    linear-gradient(90deg, #39353a 0, #5a5755 4%, #807b79 8%, #939195 14%, #949297 66%, #968d80 78%, #968e7f 94%, #857c80 100%);
  box-shadow: 0 0 1px 1px #444, 0 0 70px rgba(0, 0, 0, .3);
}
.app {
  position: relative;
  flex: 1;
  display: flex;
  flex-direction: column;
  align-items: center;
  justify-content: flex-start;
  padding-top: 19px;
}
.app svg { width: 88px; height: 88px; overflow: visible; filter: drop-shadow(0 2px 2px rgba(0, 0, 0, .35)); }
.on::after { content: ""; width: 8px; height: 8px; margin-top: 18px; border-radius: 50%; background: #fff; }
.divider { flex: 0 0 53px; border: solid transparent; border-width: 17px 26px 19px; background: #c4c2c2 content-box; background-clip: padding-box; }
.badge {
  position: absolute;
  left: 50%;
  top: 9px;
  margin-left: 16px;
  min-width: 42px;
  height: 42px;
  border-radius: 21px;
  background: #e64e41;
  color: #fff;
  font-size: 26px;
  line-height: 42px;
  text-align: center;
  box-shadow: 0 1px 3px rgba(0, 0, 0, .4);
}
.wide { width: 48px; margin-left: 8px; }
.app text { font-family: Inter, sans-serif; text-anchor: middle; fill: #fff; }
.app .t8 { font-size: 8px; font-weight: 600; }
.app .t9 { font-size: 9px; fill: #222; }
.app .t10 { font-size: 12px; font-weight: 600; }
.app .t16 { font-size: 20px; font-weight: 600; }
.app .t24 { font-size: 24px; font-weight: 600; }
.app .t52 { font-size: 54px; font-weight: 300; fill: #222; }
```
